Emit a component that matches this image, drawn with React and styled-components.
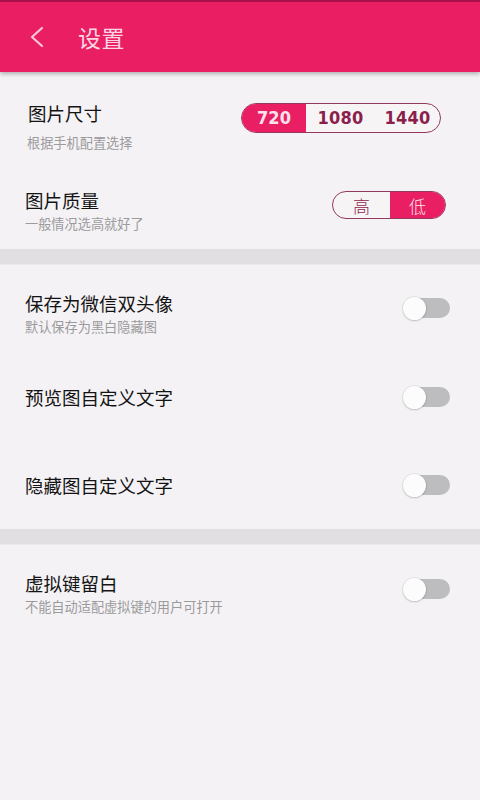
import React from "react";
import styled, { createGlobalStyle } from "styled-components";

const Global = createGlobalStyle`
  html, body { margin: 0; padding: 0; background: #f4f2f5; }
  body { font-family: "Noto Sans CJK SC", "Noto Sans", sans-serif; }
  * { box-sizing: border-box; }
`;

const Page = styled.div`
  width: 480px;
  min-height: 800px;
  background: #f4f2f5;
`;

const Header = styled.header`
  height: 72px;
  background: #ea1e63;
  border-top: 2px solid #a8114a;
  box-shadow: 0 2px 4px rgba(0, 0, 0, 0.28);
  display: flex;
  align-items: center;
  padding-left: 29px;
  position: relative;
  z-index: 1;
`;

const BackIcon = styled.svg`
  width: 16px;
  height: 22px;
  flex: none;
`;

const Title = styled.h1`
  margin: 0 0 0 33px;
  font-size: 23px;
  font-weight: 400;
  color: #fbd6e2;
  letter-spacing: 0.5px;
  line-height: 30px;
`;

const Section = styled.section`
  padding-top: ${(p) => p.$pt || 0}px;
`;

const Divider = styled.div`
  height: 16px;
  background: #e1dfe2;
  border-bottom: 1px solid #ebe9ec;
`;

const Row = styled.div`
  height: 88px;
  display: flex;
  align-items: center;
  justify-content: space-between;
  padding: 0 ${(p) => p.$pr || 31}px 0 ${(p) => p.$pl || 25}px;
`;

const TextCol = styled.div`
  display: flex;
  flex-direction: column;
  align-self: ${(p) => (p.$top != null ? "flex-start" : "center")};
  padding-top: ${(p) => p.$top || 0}px;
`;

const RowTitle = styled.div`
  font-size: 18.5px;
  line-height: 24px;
  color: #141414;
`;

const RowSub = styled.div`
  font-size: 13.2px;
  line-height: 18px;
  color: #9b9a9c;
  margin-top: ${(p) => p.$gap || 3}px;
  margin-left: ${(p) => p.$dx || 0}px;
`;

const Segmented = styled.div`
  display: flex;
  height: ${(p) => p.$h}px;
  border: 1.5px solid #933a60;
  border-radius: 999px;
  overflow: hidden;
  background: #f7f4f6;
  margin-top: ${(p) => p.$mt || 0}px;
`;

const Segment = styled.div`
  width: ${(p) => p.$w}px;
  display: flex;
  align-items: center;
  justify-content: center;
  background: ${(p) => (p.$active ? "#e91e63" : "transparent")};
  color: ${(p) => (p.$active ? "#fbe3ec" : "#8a1f4c")};
`;

const NumText = styled.span`
  display: inline-block;
  font-family: "DejaVu Sans", sans-serif;
  font-weight: 700;
  font-size: 18px;
  letter-spacing: 0.2px;
  transform: scaleX(0.9);
`;

const HanText = styled.span`
  font-family: "Noto Sans CJK SC", sans-serif;
  font-weight: 300;
  font-size: 17px;
`;

const Toggle = styled.div`
  position: relative;
  width: 47px;
  height: 23px;
  flex: none;
  margin-top: ${(p) => p.$mt || 0}px;
`;

const Track = styled.div`
  position: absolute;
  left: 2px;
  right: 0;
  top: 1.5px;
  height: 20px;
  border-radius: 10px;
  background: #bdbcbe;
`;

const Thumb = styled.div`
  position: absolute;
  left: 0;
  top: 0;
  width: 23px;
  height: 23px;
  border-radius: 50%;
  background: #fcfcfc;
  box-shadow: 0 0 0 1px rgba(0, 0, 0, 0.06), 0 1px 2px rgba(0, 0, 0, 0.16);
`;

const Switch = ({ mt }) => (
  <Toggle $mt={mt}>
    <Track />
    <Thumb />
  </Toggle>
);

export default function App() {
  return (
    <Page>
      <Global />
      <Header>
        <BackIcon viewBox="0 0 16 22">
          <path d="M13 2 L3 11 L13 20" fill="none" stroke="#f7c8d8" strokeWidth="2.2" strokeLinecap="round" strokeLinejoin="round" />
        </BackIcon>
        <Title>设置</Title>
      </Header>

      <Section $pt={1}>
        <Row $pl={28} $pr={39}>
          <TextCol $top={28}>
            <RowTitle>图片尺寸</RowTitle>
            <RowSub $gap={9} $dx={-1}>根据手机配置选择</RowSub>
          </TextCol>
          <Segmented $h={30} $mt={1}>
            <Segment $w={64} $active>
              <NumText>720</NumText>
            </Segment>
            <Segment $w={68}>
              <NumText>1080</NumText>
            </Segment>
            <Segment $w={66}>
              <NumText>1440</NumText>
            </Segment>
          </Segmented>
        </Row>
        <Row $pr={34}>
          <TextCol $top={27}>
            <RowTitle>图片质量</RowTitle>
            <RowSub>一般情况选高就好了</RowSub>
          </TextCol>
          <Segmented $h={28}>
            <Segment $w={57}>
              <HanText>高</HanText>
            </Segment>
            <Segment $w={55} $active>
              <HanText>低</HanText>
            </Segment>
          </Segmented>
        </Row>
      </Section>

      <Divider />

      <Section>
        <Row $pr={30}>
          <TextCol $top={26}>
            <RowTitle>保存为微信双头像</RowTitle>
            <RowSub>默认保存为黑白隐藏图</RowSub>
          </TextCol>
          <Switch mt={-2} />
        </Row>
        <Row $pr={30}>
          <TextCol>
            <RowTitle>预览图自定义文字</RowTitle>
          </TextCol>
          <Switch />
        </Row>
        <Row $pr={30}>
          <TextCol>
            <RowTitle>隐藏图自定义文字</RowTitle>
          </TextCol>
          <Switch />
        </Row>
      </Section>

      <Divider />

      <Section>
        <Row $pr={30}>
          <TextCol $top={26}>
            <RowTitle>虚拟键留白</RowTitle>
            <RowSub>不能自动适配虚拟键的用户可打开</RowSub>
          </TextCol>
          <Switch />
        </Row>
      </Section>
    </Page>
  );
}
